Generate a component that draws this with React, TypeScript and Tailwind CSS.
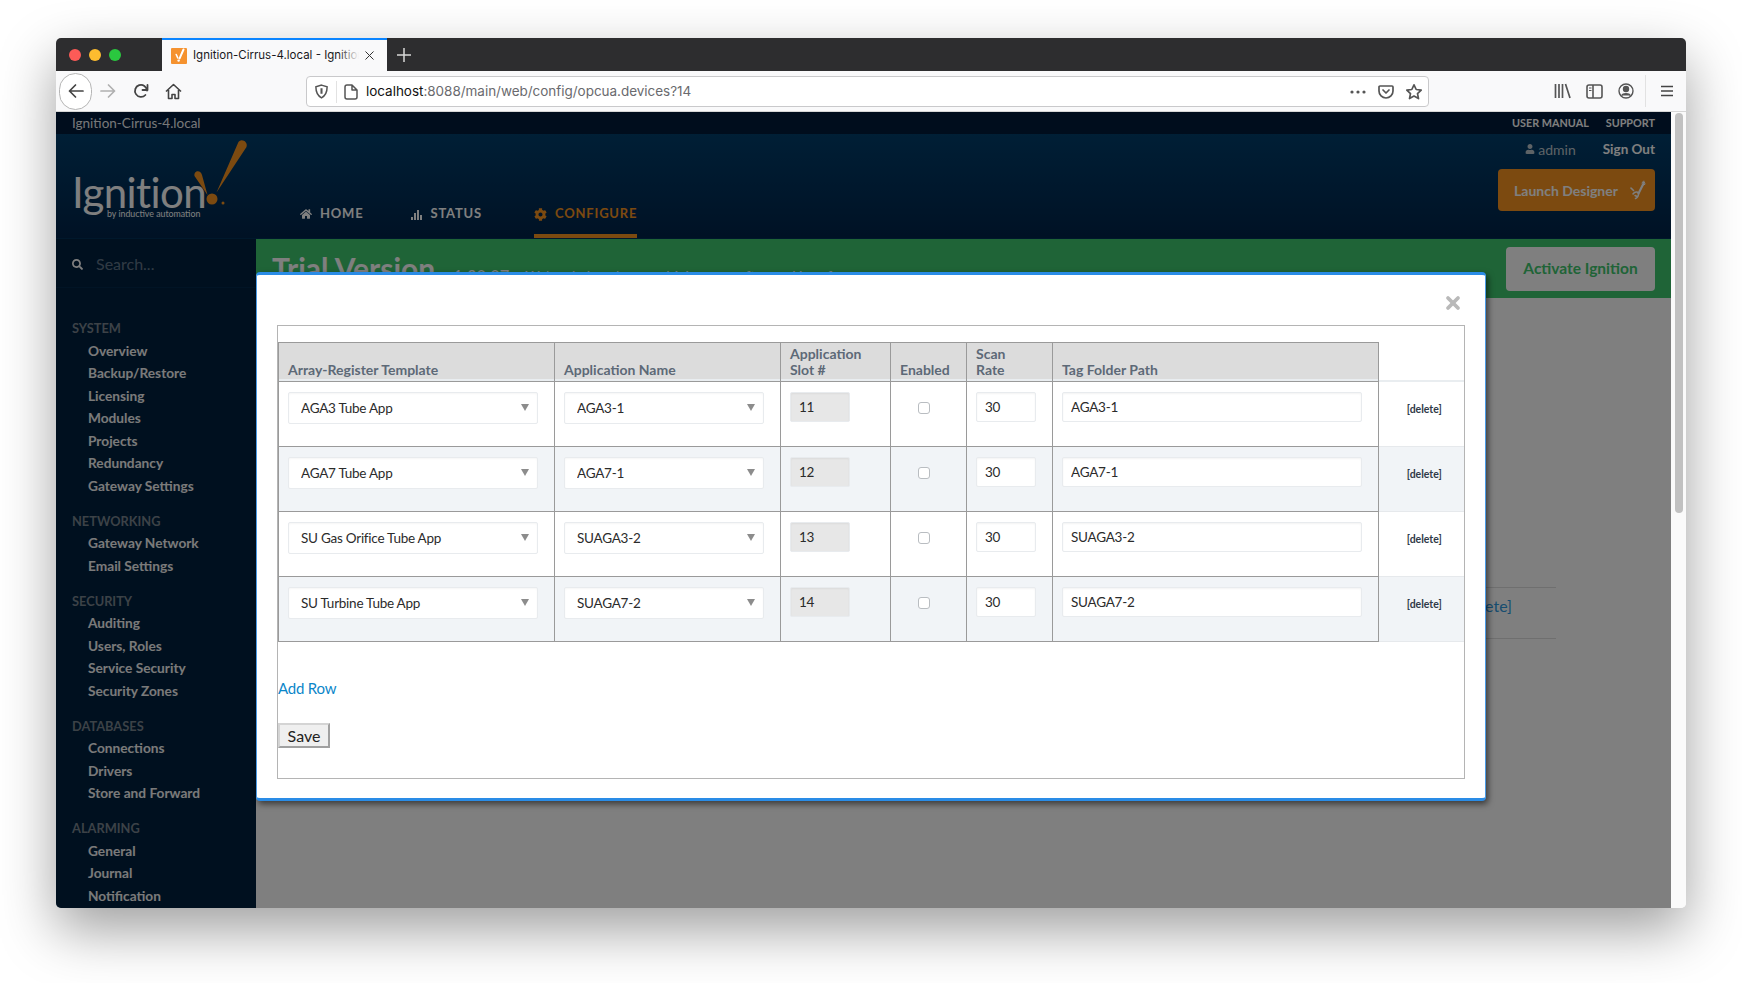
import React from "react";
import { FaHome, FaCog, FaSearch, FaUser } from "react-icons/fa";
import { X } from "lucide-react";

const navGroups = [
  { title: "System", items: ["Overview", "Backup/Restore", "Licensing", "Modules", "Projects", "Redundancy", "Gateway Settings"] },
  { title: "Networking", items: ["Gateway Network", "Email Settings"] },
  { title: "Security", items: ["Auditing", "Users, Roles", "Service Security", "Security Zones"] },
  { title: "Databases", items: ["Connections", "Drivers", "Store and Forward"] },
  { title: "Alarming", items: ["General", "Journal", "Notification"] },
];

const rows = [
  { template: "AGA3 Tube App", app: "AGA3-1", slot: "11", path: "AGA3-1" },
  { template: "AGA7 Tube App", app: "AGA7-1", slot: "12", path: "AGA7-1" },
  { template: "SU Gas Orifice Tube App", app: "SUAGA3-2", slot: "13", path: "SUAGA3-2" },
  { template: "SU Turbine Tube App", app: "SUAGA7-2", slot: "14", path: "SUAGA7-2" },
];

function Caret() {
  return (
    <svg width="8" height="7" viewBox="0 0 8 7" className="absolute right-[9px] top-[12px] pointer-events-none">
      <path d="M0 0h8L4 7z" fill="#8c8c8c" />
    </svg>
  );
}

function SelectBox({ value, className }: { value: string; className: string }) {
  return (
    <div className={`relative h-[32px] ${className}`}>
      <select
        defaultValue={value}
        className="w-full h-full appearance-none bg-white border border-[#e8ebee] rounded-[2px] pl-[12px] text-[13.5px] tracking-[-0.25px] text-[#2b2b2b] shadow-[inset_0_1px_2px_rgba(0,0,0,0.04)] outline-none"
      >
        <option>{value}</option>
      </select>
      <Caret />
    </div>
  );
}

function TextBox({ value, className }: { value: string; className: string }) {
  return (
    <input
      readOnly
      defaultValue={value}
      className={`block h-[30px] border border-[#e8ebee] rounded-[2px] pl-[8px] text-[13.5px] tracking-[-0.25px] text-[#2b2b2b] shadow-[inset_0_1px_2px_rgba(0,0,0,0.05)] outline-none ${className}`}
    />
  );
}

function BrowserChrome() {
  return (
    <>
      {/* title bar with the tab */}
      <div className="h-[33px] bg-[#2d2d2f] flex items-stretch shrink-0">
        <div className="w-[106px] flex items-center pl-[13px] gap-[8px]">
          <span className="w-[12px] h-[12px] rounded-full bg-[#fc5b57]" />
          <span className="w-[12px] h-[12px] rounded-full bg-[#fdbc2f]" />
          <span className="w-[12px] h-[12px] rounded-full bg-[#2ac83f]" />
        </div>
        <div className="w-[225px] bg-[#f9f9fa] border-t-2 border-[#0a84ff] flex items-center pl-[9px] relative">
          <svg width="16" height="16" viewBox="0 0 16 16" className="shrink-0">
            <rect width="16" height="16" fill="#f5922f" rx="1" />
            <path d="M12.5 1.5 8.6 10.4" stroke="#fff" strokeWidth="2" strokeLinecap="round" />
            <path d="M5.2 6.5 6.8 10" stroke="#fff" strokeWidth="1.6" strokeLinecap="round" />
            <circle cx="7.6" cy="12.6" r="1.2" fill="#fff" />
          </svg>
          <span className="ml-[6px] w-[166px] overflow-hidden whitespace-nowrap text-[11.500px] text-[#18181a] [font-family:Inter,sans-serif]">
            Ignition-Cirrus-4.local - Ignition
          </span>
          <X size={15} strokeWidth={1.6} className="ml-[3px] text-[#333]" />
          <div className="absolute left-[176px] top-0 bottom-0 w-[21px] bg-gradient-to-r from-transparent to-[#f9f9fa]" />
        </div>
        <div className="w-[34px] flex items-center justify-center">
          <svg width="14" height="14" viewBox="0 0 14 14">
            <path d="M7 0v14M0 7h14" stroke="#d8d8d8" strokeWidth="1.5" />
          </svg>
        </div>
      </div>

      {/* toolbar */}
      <div className="h-[41px] bg-[#f9f9fa] border-b border-[#d6d6d6] flex items-center shrink-0 relative">
        <div className="ml-[3px] w-[33px] h-[37px] rounded-full border border-[#b5b5b5] bg-white flex items-center justify-center">
          <svg width="16" height="16" viewBox="0 0 16 16" fill="none" stroke="#444" strokeWidth="1.7" strokeLinecap="round" strokeLinejoin="round">
            <path d="M15 8H1.5M7.5 2 1.5 8l6 6" />
          </svg>
        </div>
        <svg width="16" height="16" viewBox="0 0 16 16" fill="none" stroke="#b0b0b0" strokeWidth="1.7" strokeLinecap="round" strokeLinejoin="round" className="ml-[8px]">
          <path d="M1 8h13.5M8.5 2l6 6-6 6" />
        </svg>
        <svg width="16" height="16" viewBox="0 0 16 16" fill="none" stroke="#444" strokeWidth="1.8" strokeLinecap="round" strokeLinejoin="round" className="ml-[17px]">
          <path d="M14 7.5A6 6 0 1 0 12.4 12" />
          <path d="M14.5 2v5h-5" />
        </svg>
        <svg width="17" height="17" viewBox="0 0 17 17" fill="none" stroke="#444" strokeWidth="1.6" strokeLinejoin="round" className="ml-[16px]">
          <path d="M1 8.5 8.5 1.5 16 8.5M3.5 7v8.5h3.5v-4h3v4h3.5V7" />
        </svg>

        {/* url bar */}
        <div className="absolute left-[250px] top-[5px] w-[1123px] h-[31px] bg-white border border-[#c9c9cb] rounded-[4px] flex items-center">
          <svg width="15" height="15" viewBox="0 0 16 16" fill="none" stroke="#555" strokeWidth="1.6" className="ml-[7px]">
            <path d="M8 1.2 14 3c0 6-1.5 9.5-6 11.8C3.5 12.500 2 9 2 3z" />
            <path d="M8 4.500v6" strokeWidth="2.200" />
          </svg>
          <span className="ml-[7px] w-px h-[22px] bg-[#e2e2e2]" />
          <svg width="14" height="16" viewBox="0 0 14 16" fill="none" stroke="#555" strokeWidth="1.5" strokeLinejoin="round" className="ml-[7px]">
            <path d="M1 3a2 2 0 0 1 2-2h5l5 5v7a2 2 0 0 1-2 2H3a2 2 0 0 1-2-2zM8 1v5h5" />
          </svg>
          <span className="ml-[8px] text-[13.5px] tracking-[-0.03px] text-[#111] whitespace-nowrap [font-family:Inter,sans-serif]">
            localhost<span className="text-[#6a6a6e]">:8088/main/web/config/opcua.devices?14</span>
          </span>
          <div className="ml-auto flex items-center">
            <svg width="16" height="4" viewBox="0 0 16 4" fill="#555">
              <circle cx="2" cy="2" r="1.6" /><circle cx="8" cy="2" r="1.6" /><circle cx="14" cy="2" r="1.6" />
            </svg>
            <svg width="16" height="16" viewBox="0 0 16 16" fill="none" stroke="#555" strokeWidth="1.7" strokeLinecap="round" strokeLinejoin="round" className="ml-[12px]">
              <path d="M2 2h12a1 1 0 0 1 1 1v4a7 7 0 0 1-14 0V3a1 1 0 0 1 1-1zM5 6l3 3 3-3" />
            </svg>
            <svg width="18" height="18" viewBox="0 0 18 18" fill="none" stroke="#555" strokeWidth="1.7" strokeLinejoin="round" className="ml-[11px] mr-[5px]">
              <path d="m9 1.800 2.200 4.700 5 .6-3.700 3.500 1 5L9 13.100 4.500 15.600l1-5L1.800 7.100l5-.6z" />
            </svg>
          </div>
        </div>

        {/* right side icons */}
        <div className="absolute right-[12px] top-0 bottom-0 flex items-center">
          <svg width="17" height="16" viewBox="0 0 17 16" fill="none" stroke="#555" strokeWidth="1.7">
            <path d="M1.500 1v14M5 1v14M8.500 1v14M11.500 1l4.500 14" />
          </svg>
          <svg width="17" height="15" viewBox="0 0 17 15" fill="none" stroke="#555" strokeWidth="1.6" className="ml-[15px]">
            <rect x="1" y="1" width="15" height="13" rx="2" />
            <path d="M7 1v13" />
            <path d="M3 4h2.500M3 6.500h2.500" strokeWidth="1.2" />
          </svg>
          <svg width="16" height="16" viewBox="0 0 16 16" fill="none" stroke="#555" strokeWidth="1.4" className="ml-[15px]">
            <circle cx="8" cy="8" r="7" />
            <circle cx="8" cy="6" r="2.500" fill="#555" />
            <path d="M3.500 12.500C5 10 11 10 12.500 12.500" fill="#555" />
          </svg>
          <span className="ml-[11px] w-px h-[32px] bg-[#e2e2e2]" />
          <svg width="14" height="12" viewBox="0 0 14 12" stroke="#444" strokeWidth="1.7" className="ml-[14px]">
            <path d="M1 1.500h12M1 6h12M1 10.500h12" />
          </svg>
        </div>
      </div>
    </>
  );
}

function PageHeader() {
  return (
    <header className="shrink-0">
      <div className="h-[22px] bg-[#001a3a] flex items-center justify-between pl-[16px] pr-[16px]">
        <span className="text-[13.500px] text-white/95">Ignition-Cirrus-4.local</span>
        <div className="flex gap-[17px] text-[10.800px] font-bold uppercase text-white">
          <span>User Manual</span>
          <span>Support</span>
        </div>
      </div>
      <div className="h-[105px] bg-gradient-to-b from-[#003e6c] to-[#00244a] border-b border-[#003058] flex">
        {/* logo */}
        <div className="relative w-[214px] shrink-0">
          <span className="absolute left-[16px] top-[41px] text-[42px] leading-[34px] tracking-[-0.6px] font-normal text-white whitespace-nowrap">Ignition</span>
          <span className="absolute left-[51px] top-[75px] text-[8.800px] leading-[10px] text-white whitespace-nowrap">by inductive automation</span>
          <svg width="60" height="76" viewBox="0 0 60 76" className="absolute left-[138px] top-0 overflow-visible">
            <path d="M44 9C46 3.500 54.500 7 52.500 13L22.500 58.500z" fill="#f89420" />
            <path d="M0.500 42C-0.500 36 7 35.500 8 41L13.500 61z" fill="#f89420" />
            <circle cx="18" cy="65" r="5.500" fill="#f89420" />
            <circle cx="29" cy="69" r="1.500" fill="#f89420" />
          </svg>
        </div>
        {/* main nav */}
        <nav className="flex items-end pl-[30px] text-[13px] font-bold tracking-[0.8px] uppercase">
          <div className="flex items-center h-[46px] pb-[2px] text-white">
            <FaHome size={12} className="mr-[8px]" />
            Home
          </div>
          <div className="flex items-center h-[46px] pb-[2px] ml-[48px] text-white">
            <svg width="11" height="11" viewBox="0 0 11 11" fill="currentColor" className="mr-[8px]">
              <path d="M0 8h2v3H0zM3 4h2v7H3zM6 1h2v10H6zM9 6h2v5H9z" />
            </svg>
            Status
          </div>
          <div className="flex items-center h-[46px] pt-[2px] ml-[52px] text-[#f89420] border-b-4 border-[#f89420]">
            <FaCog size={13} className="mr-[8px]" />
            Configure
          </div>
        </nav>
        {/* user area */}
        <div className="ml-auto flex flex-col items-end pr-[16px] pt-[4px]">
          <div className="flex items-center h-[22px]">
            <FaUser size={10} className="text-[#bcc6cc] mr-[3px]" />
            <span className="text-[14px] text-[#bcc6cc]">admin</span>
            <span className="ml-[27px] text-[13.500px] font-bold text-white">Sign Out</span>
          </div>
          <div className="mt-[9px] w-[157px] h-[42px] bg-[#f89420] rounded-[4px] flex items-center pl-[16px] text-[14px] font-bold text-white">
            Launch Designer
            <svg width="17" height="20" viewBox="0 0 17 20" fill="none" stroke="currentColor" strokeLinecap="round" strokeLinejoin="round" className="ml-[11px]">
              <path d="M15 2.500 9.500 13.500" strokeWidth="2.200" />
              <path d="M13 3 14.500 1M16.200 4 14.800 5" strokeWidth="1" />
              <path d="M2 8 4.500 10.500" strokeWidth="1.600" />
              <path d="M4 14c2-3 6-2.500 5.500 0.500S8 18 6.500 18.500M8 16.500l-2-1" strokeWidth="1.500" />
            </svg>
          </div>
        </div>
      </div>
    </header>
  );
}

function Sidebar() {
  return (
    <aside className="w-[200px] shrink-0 bg-[#00203e] overflow-hidden flex flex-col">
      <div className="h-[49px] shrink-0 border-b border-[#02294b] flex items-center pl-[16px]">
        <FaSearch size={11} className="text-white mt-[3px]" />
        <span className="ml-[13px] mt-[1px] text-[16px] text-white/40">Search...</span>
      </div>
      <div className="pt-[29px] pl-[16px]">
        {navGroups.map((g) => (
          <div key={g.title} className="mb-[12.500px]">
            <div className="text-[12.800px] leading-[22.500px] font-bold uppercase text-[#78848f]">{g.title}</div>
            {g.items.map((item) => (
              <div key={item} className="pl-[16px] text-[13.700px] leading-[22.500px] font-bold text-[#f5f5f5]">
                {item}
              </div>
            ))}
          </div>
        ))}
      </div>
    </aside>
  );
}

function DeviceModal() {
  const headCell = "border border-[#9a9a9a] bg-[#dcdcdc] align-bottom text-left px-[9px] pb-[3px] text-[14px] leading-[16px] font-bold text-[#5d6977] shadow-[inset_0_-2px_0_#e9edf0]";
  const bodyCell = "border border-[#9a9a9a] align-top pt-[10px] px-[9px]";
  return (
    <div className="absolute left-[200px] top-[160px] w-[1230px] h-[529px] bg-white border-x border-[#4b9be6] border-t-[3px] border-b-[3px] border-t-[#2a8ce6] border-b-[#2a8ce6] rounded-[4px] shadow-[2px_3px_6px_rgba(0,0,0,0.55)] z-20 pt-[50px] pl-[20px] pr-[20px]">
      <button className="absolute right-[22px] top-[18px] text-[#b9b9b9]">
        <X size={20} strokeWidth={4.5} />
      </button>
      <div className="h-[454px] border border-[#b4b4b4] pt-[16px]">
        <table className="border-collapse table-fixed w-[1185px]">
          <colgroup>
            <col className="w-[276px]" />
            <col className="w-[226px]" />
            <col className="w-[110px]" />
            <col className="w-[76px]" />
            <col className="w-[86px]" />
            <col className="w-[326px]" />
            <col className="w-[85px]" />
          </colgroup>
          <thead>
            <tr className="h-[39px]">
              <th className={headCell}>Array-Register Template</th>
              <th className={headCell}>Application Name</th>
              <th className={headCell}>Application<br />Slot #</th>
              <th className={headCell}>Enabled</th>
              <th className={headCell}>Scan<br />Rate</th>
              <th className={headCell}>Tag Folder Path</th>
              <th className="shadow-[inset_0_-2px_0_#e9edf0]" />
            </tr>
          </thead>
          <tbody>
            {rows.map((r, i) => (
              <tr key={r.slot} className={`h-[65px] ${i % 2 === 1 ? "bg-[#f1f4f7]" : "bg-white"}`}>
                <td className={bodyCell}>
                  <SelectBox value={r.template} className="w-[250px]" />
                </td>
                <td className={bodyCell}>
                  <SelectBox value={r.app} className="w-[200px]" />
                </td>
                <td className={bodyCell}>
                  <TextBox value={r.slot} className="w-[60px] bg-[#e7e7e7]" />
                </td>
                <td className={`${bodyCell} pl-[27px]`}>
                  <span className="block mt-[10px] w-[12px] h-[12px] bg-white rounded-[3px] border border-[#b9bdc1]" />
                </td>
                <td className={bodyCell}>
                  <TextBox value="30" className="w-[60px] bg-white" />
                </td>
                <td className={bodyCell}>
                  <TextBox value={r.path} className="w-[300px] bg-white" />
                </td>
                <td className="border-b border-[#e6e9ec] text-center text-[10.500px] font-bold text-[#2f3a48] pb-[8px] pl-[6px]">[delete]</td>
              </tr>
            ))}
          </tbody>
        </table>
        <a className="block mt-[35px] text-[15px] tracking-[-0.2px] leading-[22px] text-[#0b86c9]">Add Row</a>
        <button className="block mt-[24px] w-[52px] h-[25px] bg-[#efefef] border-2 border-t-[#d4d4d4] border-l-[#d4d4d4] border-r-[#a0a0a0] border-b-[#a0a0a0] text-[16px] leading-[20px] text-[#222]">
          Save
        </button>
      </div>
    </div>
  );
}

export default function App() {
  return (
    <div className="w-[1742px] h-[983px] bg-white overflow-hidden pt-[38px] pl-[56px] [font-family:Lato,sans-serif]">
      <div className="w-[1630px] h-[870px] rounded-[5px] overflow-hidden flex flex-col shadow-[0_22px_55px_rgba(0,0,0,0.38)] bg-[#f9f9fa]">
        <BrowserChrome />
        <div className="flex-1 flex min-h-0">
          <div className="flex-1 min-w-0 flex flex-col relative overflow-hidden">
            <PageHeader />
            <div className="flex-1 min-h-0 flex">
              <Sidebar />
              <main className="flex-1 min-w-0 bg-white flex flex-col">
                <div className="h-[59px] shrink-0 bg-[#3ec86e] flex items-start pl-[16px] pr-[16px] pt-[9px]">
                  <span className="text-[30px] leading-[40px] font-bold text-white">Trial Version</span>
                  <span className="ml-[18px] mt-[17px] text-[16.500px] text-white">1:30:07</span>
                  <span className="ml-[16px] mt-[17px] text-[14px] text-white">We're glad you're test driving our software. Have fun.</span>
                  <div className="ml-auto -mt-[1px] w-[149px] h-[44px] bg-white rounded-[4px] flex items-center justify-center text-[15.500px] font-bold text-[#3ec86e]">
                    Activate Ignition
                  </div>
                </div>
                <div className="mt-[289px] mr-[115px] h-[52px] border-y border-[#dedede] flex items-center justify-end pr-[44px] pb-[14px] text-[16px] text-[#2f9ae0]">
                  [delete]
                </div>
              </main>
            </div>
            {/* dimmed backdrop */}
            <div className="absolute inset-0 bg-black/50 z-10" />
            <DeviceModal />
          </div>
          {/* scrollbar */}
          <div className="w-[15px] shrink-0 bg-[#fafafa] pt-[1px] flex justify-center">
            <div className="w-[8px] h-[400px] rounded-full bg-[#c1c1c1]" />
          </div>
        </div>
      </div>
    </div>
  );
}
